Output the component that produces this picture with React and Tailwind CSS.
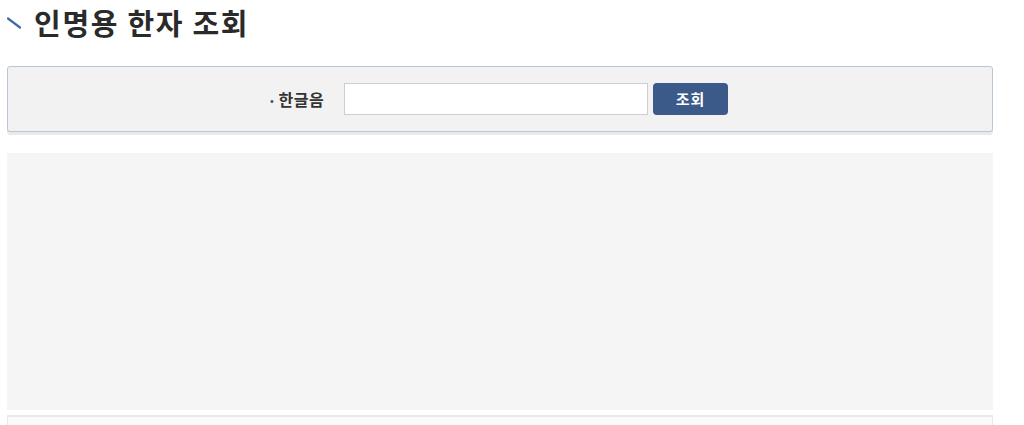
import React from 'react';

const font = { fontFamily: '"Noto Sans CJK KR", "Noto Sans", sans-serif' };

export default function App() {
  return (
    <div className="w-[1024px] h-[425px] overflow-hidden bg-white" style={font}>
      <div className="flex items-center h-[44px] pl-[7px]">
        <svg width="14" height="12" viewBox="0 0 14 12" className="mt-[1px]">
          <line x1="1" y1="1.5" x2="13" y2="10.5" stroke="#3f6aa6" strokeWidth="2.2" strokeLinecap="round" />
        </svg>
        <h1 className="ml-[13px] text-[29px] font-bold text-[#2a2a2a] leading-none tracking-[1.7px]">인명용 한자 조회</h1>
      </div>

      <div className="mx-[7px] mt-[22px] w-[986px]">
        <div className="h-[66px] bg-[#f2f2f2] border border-[#b9c6d4] rounded-[3px] shadow-[0_3px_0_#e9e9e9] flex items-center pl-[262px]">
          <span className="w-[60px] whitespace-nowrap text-[16px] font-bold text-[#333] flex items-center tracking-[0.6px]">
            <span className="text-[10px] text-[#555] mr-[4px]">•</span>한글음
          </span>
          <input
            type="text"
            className="ml-[14px] w-[304px] h-[32px] bg-white border border-[#cfcfcf] outline-none"
          />
          <button className="ml-[5px] w-[75px] h-[32px] rounded-[4px] bg-[#3b5989] text-white text-[15px] font-bold tracking-[1px]">
            조회
          </button>
        </div>

        <div className="mt-[21px] h-[257px] bg-[#f5f5f5]" />

        <div className="mt-[5px] h-[20px] bg-[#fafafa] border-l border-r border-t-2 border-[#e9e9e9]" />
      </div>
    </div>
  );
}
